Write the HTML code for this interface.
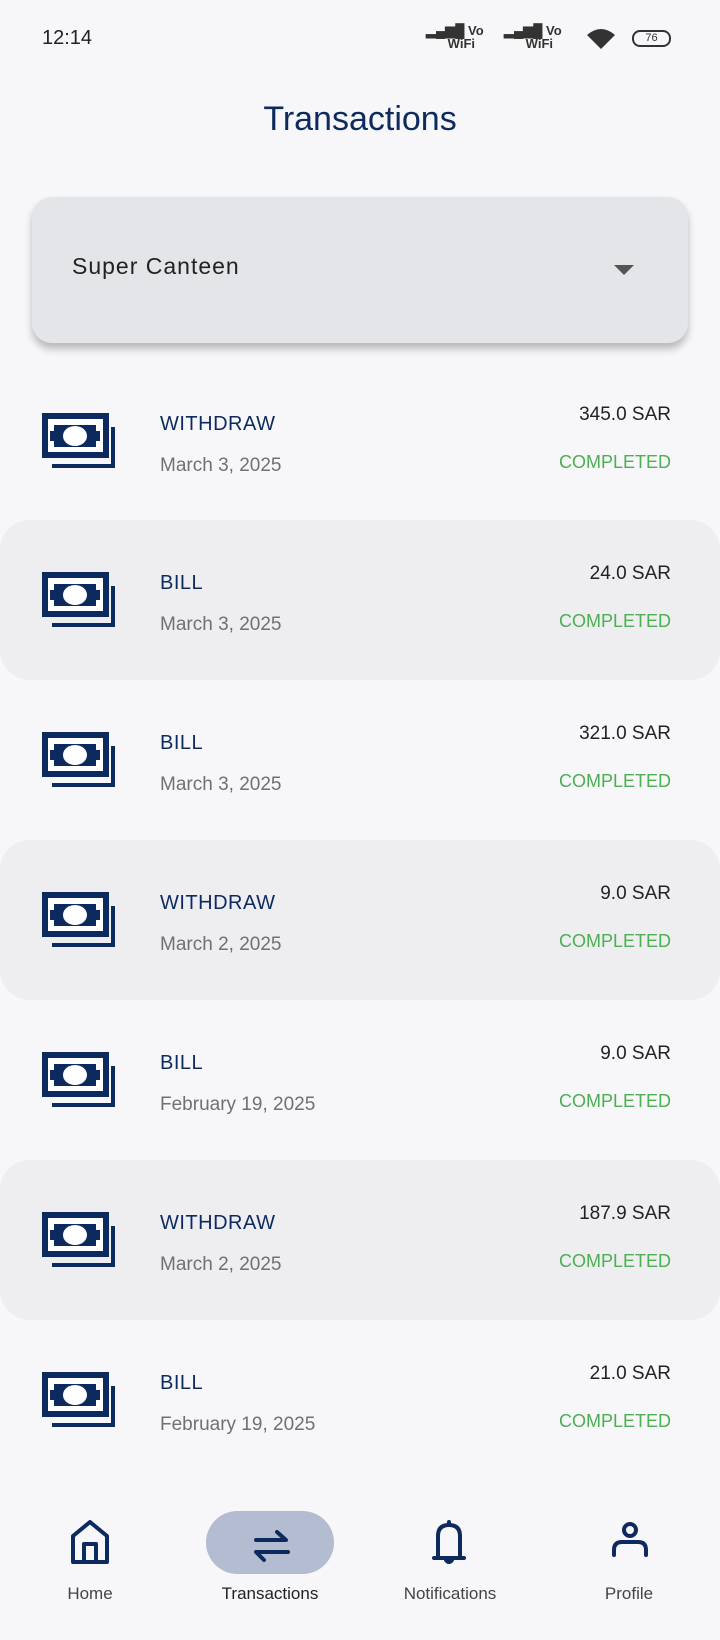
<!DOCTYPE html>
<html><head><meta charset="utf-8"><style>
*{margin:0;padding:0;box-sizing:border-box}
body{width:720px;height:1640px;background:#f7f7fa;font-family:"Liberation Sans",sans-serif;position:relative;overflow:hidden;color:#0d2a5e}
.abs{position:absolute}
.row{position:absolute;left:0;width:720px;height:160px}
.row.s{background:#eeeef1;border-radius:30px}
.ic{position:absolute;left:42px;top:52px}
.t{position:absolute;left:160px;top:52px;font-size:20px;color:#0d2a5e;letter-spacing:0.5px}
.d{position:absolute;left:160px;top:94px;font-size:19px;color:#707070}
.a{position:absolute;right:49px;top:43px;font-size:19px;color:#222}
.c{position:absolute;right:49px;top:91px;font-size:18px;color:#4caf50}
.nl{position:absolute;top:1584px;font-size:17px;color:#444;text-align:center;width:160px}
</style></head><body>
<div class="abs" style="left:42px;top:27px;font-size:20px;color:#222">12:14</div>
<div class="abs" style="left:426px;top:24px;font-size:13px;color:#333;font-weight:bold;line-height:13px">▂▄▆█ Vo<br>&nbsp;&nbsp;&nbsp;&nbsp;&nbsp;&nbsp;WiFi</div>
<div class="abs" style="left:504px;top:24px;font-size:13px;color:#333;font-weight:bold;line-height:13px">▂▄▆█ Vo<br>&nbsp;&nbsp;&nbsp;&nbsp;&nbsp;&nbsp;WiFi</div>
<svg class="abs" style="left:585px;top:26px" width="32" height="24"><path d="M2 9Q16 -3 30 9L16 23Z" fill="#333"/></svg>
<div class="abs" style="left:632px;top:30px;width:39px;height:17px;border:2px solid #333;border-radius:8px;font-size:11px;text-align:center;line-height:13px;color:#333">76</div>
<div class="abs" style="left:0;width:720px;top:100px;text-align:center;font-size:34px;color:#0d2a5e">Transactions</div>
<div class="abs" style="left:32px;top:197px;width:656px;height:146px;background:#e4e5e9;border-radius:20px;box-shadow:0 6px 8px rgba(0,0,0,.25)">
<div class="abs" style="left:40px;top:56px;font-size:23px;color:#222;letter-spacing:1px">Super Canteen</div>
<div class="abs" style="left:582px;top:68px;width:0;height:0;border-left:10px solid transparent;border-right:10px solid transparent;border-top:10px solid #555"></div>
</div>
<svg width="0" height="0" style="position:absolute"><defs><g id="m">
<rect x="3" y="3" width="61" height="39" fill="#fff" stroke="#0d2a5e" stroke-width="6"/>
<path d="M71 14V53H10" fill="none" stroke="#0d2a5e" stroke-width="4"/>
<path d="M12 12H54V18H58V28H54V34H12V28H8V18H12Z" fill="#0d2a5e"/>
<ellipse cx="33" cy="23" rx="12" ry="10" fill="#fff"/>
</g></defs></svg>
<div class="row" style="top:361px"><svg class="ic" width="76" height="56"><use href="#m"/></svg><div class="t">WITHDRAW</div><div class="d">March 3, 2025</div><div class="a">345.0 SAR</div><div class="c">COMPLETED</div></div>
<div class="row s" style="top:520px"><svg class="ic" width="76" height="56"><use href="#m"/></svg><div class="t">BILL</div><div class="d">March 3, 2025</div><div class="a">24.0 SAR</div><div class="c">COMPLETED</div></div>
<div class="row" style="top:680px"><svg class="ic" width="76" height="56"><use href="#m"/></svg><div class="t">BILL</div><div class="d">March 3, 2025</div><div class="a">321.0 SAR</div><div class="c">COMPLETED</div></div>
<div class="row s" style="top:840px"><svg class="ic" width="76" height="56"><use href="#m"/></svg><div class="t">WITHDRAW</div><div class="d">March 2, 2025</div><div class="a">9.0 SAR</div><div class="c">COMPLETED</div></div>
<div class="row" style="top:1000px"><svg class="ic" width="76" height="56"><use href="#m"/></svg><div class="t">BILL</div><div class="d">February 19, 2025</div><div class="a">9.0 SAR</div><div class="c">COMPLETED</div></div>
<div class="row s" style="top:1160px"><svg class="ic" width="76" height="56"><use href="#m"/></svg><div class="t">WITHDRAW</div><div class="d">March 2, 2025</div><div class="a">187.9 SAR</div><div class="c">COMPLETED</div></div>
<div class="row" style="top:1320px"><svg class="ic" width="76" height="56"><use href="#m"/></svg><div class="t">BILL</div><div class="d">February 19, 2025</div><div class="a">21.0 SAR</div><div class="c">COMPLETED</div></div>
<div class="abs" style="left:206px;top:1511px;width:128px;height:63px;border-radius:32px;background:#b3bcd0"></div>
<svg class="abs" style="left:0;top:1520px" width="720" height="50" fill="none" stroke="#0d2a5e" stroke-width="4" stroke-linecap="round" stroke-linejoin="round">
<path d="M73 42V16L90 2L107 16V42H73Z M84 42V24H96V42"/>
<path d="M256 20H286L277 12 M288 32H256L264 40"/>
<path d="M434 38H464 M438 38V16Q438 5 449 5Q460 5 460 16V38 M449 2V4 M446 40Q449 44 452 40"/>
<circle cx="630" cy="10" r="6"/><path d="M614 35V30Q614 22 622 22H638Q646 22 646 30V35"/>
</svg>
<div class="nl" style="left:10px">Home</div>
<div class="nl" style="left:190px;color:#222">Transactions</div>
<div class="nl" style="left:370px">Notifications</div>
<div class="nl" style="left:549px">Profile</div>
</body></html>
